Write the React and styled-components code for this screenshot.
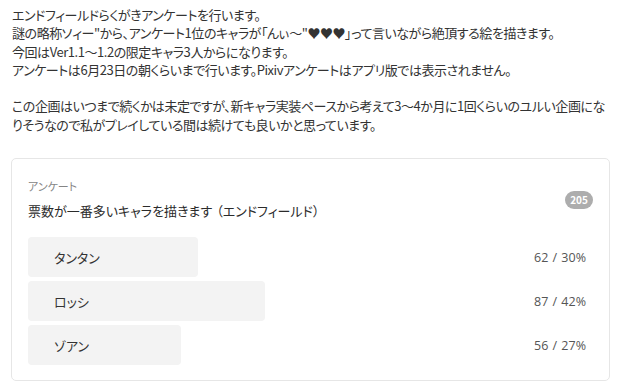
import styled, { createGlobalStyle } from "styled-components";

const GlobalStyle = createGlobalStyle`
    body {
        margin: 0;
        background: #ffffff;
        font-family: "Noto Sans CJK JP", "Noto Sans", sans-serif;
        color: #333333;
    }
`;

const Page = styled.div`
    padding: 6px 15px 0 11px;
`;

const Caption = styled.div`
    padding-left: 1px;
    font-size: 13px;
    line-height: 18.3px;
    letter-spacing: -0.45px;
    font-feature-settings: "palt";
    white-space: nowrap;
`;

const Card = styled.div`
    margin-top: 24px;
    border: 1px solid #e6e6e6;
    border-radius: 5px;
    padding: 19px 16px 15px 16px;
`;

const Header = styled.div`
    display: flex;
    align-items: center;
    justify-content: space-between;
`;

const Kicker = styled.div`
    font-size: 11px;
    line-height: 16px;
    color: #858585;
    font-feature-settings: "palt";
`;

const Question = styled.div`
    margin-top: 7px;
    font-size: 13px;
    line-height: 20px;
    color: #2b2b2b;
    font-feature-settings: "palt";
`;

const Paren = styled.span`
    margin-left: 4px;
`;

const Count = styled.div`
    min-width: 28px;
    height: 18px;
    border-radius: 9px;
    background: #adadad;
    color: #ffffff;
    font-size: 10px;
    font-weight: 700;
    line-height: 18px;
    text-align: center;
`;

const Options = styled.div`
    margin-top: 16px;
    display: flex;
    flex-direction: column;
    gap: 4px;
`;

const Row = styled.div`
    position: relative;
    height: 40px;
    display: flex;
    align-items: center;
    justify-content: space-between;
    padding: 0 7px 0 26px;
`;

const Fill = styled.div`
    position: absolute;
    left: 0;
    top: 0;
    bottom: 0;
    border-radius: 4px;
    background: #f3f3f3;
`;

const Label = styled.span`
    position: relative;
    font-size: 13px;
    color: #333333;
    font-feature-settings: "palt";
`;

const Result = styled.span`
    position: relative;
    font-family: "Open Sans", "Noto Sans", sans-serif;
    font-size: 12.5px;
    color: #555555;
    word-spacing: 1px;
`;

const lines = [
    "エンドフィールドらくがきアンケートを行います。",
    "謎の略称ソィー\"から、アンケート1位のキャラが「んぃ～\"♥♥♥」って言いながら絶頂する絵を描きます。",
    "今回はVer1.1～1.2の限定キャラ3人からになります。",
    "アンケートは6月23日の朝くらいまで行います。Pixivアンケートはアプリ版では表示されません。",
    "",
    "この企画はいつまで続くかは未定ですが、新キャラ実装ペースから考えて3～4か月に1回くらいのユルい企画にな",
    "りそうなので私がプレイしている間は続けても良いかと思っています。",
];

const options = [
    { name: "タンタン", votes: 62, pct: 30 },
    { name: "ロッシ", votes: 87, pct: 42 },
    { name: "ゾアン", votes: 56, pct: 27 },
];

export default function App() {
    return (
        <>
            <GlobalStyle />
            <Page>
                <Caption>
                    {lines.map((l, i) => (
                        <div key={i}>{l || "\u00a0"}</div>
                    ))}
                </Caption>
                <Card>
                    <Header>
                        <div>
                            <Kicker>アンケート</Kicker>
                            <Question>
                                票数が一番多いキャラを描きます<Paren>（エンドフィールド）</Paren>
                            </Question>
                        </div>
                        <Count>205</Count>
                    </Header>
                    <Options>
                        {options.map((o) => (
                            <Row key={o.name}>
                                <Fill style={{ width: `${o.pct}%` }} />
                                <Label>{o.name}</Label>
                                <Result>
                                    {o.votes} / {o.pct}%
                                </Result>
                            </Row>
                        ))}
                    </Options>
                </Card>
            </Page>
        </>
    );
}
